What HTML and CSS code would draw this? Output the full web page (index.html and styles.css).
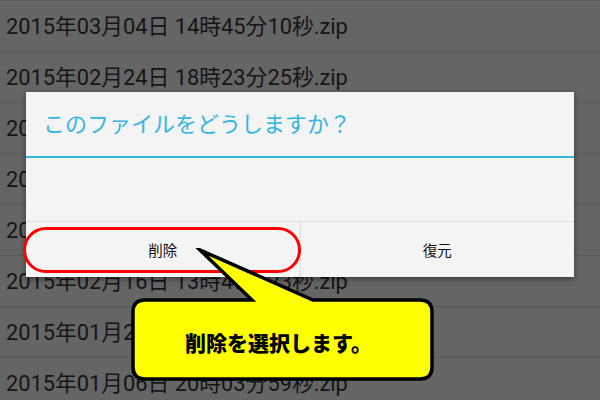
FILE: index.html
```html
<!DOCTYPE html>
<html lang="ja">
<head>
  <meta charset="UTF-8">
  <meta name="viewport" content="width=device-width, initial-scale=1.0">
  <title>ファイル一覧</title>
  <link rel="stylesheet" href="styles.css">
</head>
<body>

<div class="screen">
  <!-- File list (dimmed behind the dialog) -->
  <ul class="file-list">
    <li class="file-row">2015年03月04日 14時45分10秒.zip</li>
    <li class="file-row">2015年02月24日 18時23分25秒.zip</li>
    <li class="file-row">2015年02月23日 21時10分42秒.zip</li>
    <li class="file-row">2015年02月20日 09時31分08秒.zip</li>
    <li class="file-row">2015年02月18日 17時05分37秒.zip</li>
    <li class="file-row">2015年02月16日 13時47分23秒.zip</li>
    <li class="file-row">2015年01月27日 11時52分16秒.zip</li>
    <li class="file-row">2015年01月06日 20時03分59秒.zip</li>
  </ul>

  <!-- Dialog -->
  <div class="dialog">
    <div class="dialog-title">このファイルをどうしますか？</div>
    <div class="dialog-body"></div>
    <div class="dialog-buttons">
      <button class="dialog-btn">削除</button>
      <button class="dialog-btn">復元</button>
    </div>
  </div>

  <!-- Highlight + callout -->
  <div class="highlight"></div>
  <div class="callout">
    <svg class="callout-shape" width="306" height="134" viewBox="0 0 306 134">
      <path d="M15 52 L122 52 L70 2 L183 52 L290 52 Q302 52 302 64 L302 119 Q302 131 290 131 L15 131 Q3 131 3 119 L3 64 Q3 52 15 52 Z"
            fill="#ffff00" stroke="#000" stroke-width="3.5" stroke-linejoin="miter" stroke-miterlimit="12"/>
    </svg>
    <div class="callout-text">削除を選択します。</div>
  </div>
</div>

</body>
</html>
```

FILE: styles.css
```css
body {
  margin: 0;
  padding: 0;
  background-color: #656565;
  font-family: Roboto, "Noto Sans CJK JP", sans-serif;
}

.screen {
  position: relative;
  width: 600px;
  height: 400px;
  overflow: hidden;
  border-top: 1px solid #5a5a5a;
  box-sizing: border-box;
}

.file-list {
  list-style: none;
  margin: 0;
  padding: 0;
}

.file-row {
  height: 50px;
  line-height: 52px;
  padding-left: 6px;
  font-size: 21.8px;
  color: #151515;
  border-bottom: 1px solid #595959;
  white-space: nowrap;
}

.dialog {
  position: absolute;
  left: 26px;
  top: 91px;
  width: 548px;
  height: 185px;
  background-color: #f4f4f4;
  box-shadow: 0 2px 6px rgba(0, 0, 0, 0.45);
  display: flex;
  flex-direction: column;
}

.dialog-title {
  height: 64px;
  line-height: 60px;
  padding-left: 17px;
  font-family: "Noto Sans CJK JP", sans-serif;
  font-size: 22px;
  color: #33b5e5;
  border-bottom: 2px solid #33b5e5;
}

.dialog-body {
  flex: 1;
}

.dialog-buttons {
  display: flex;
  height: 55px;
  border-top: 1px solid #dcdcdc;
}

.dialog-btn {
  flex: 1;
  border: none;
  background: transparent;
  font-family: "Noto Sans CJK JP", sans-serif;
  font-size: 14.5px;
  color: #111;
  padding: 0;
}

.dialog-btn + .dialog-btn {
  border-left: 1px solid #dcdcdc;
}

.highlight {
  position: absolute;
  left: 23px;
  top: 226px;
  width: 272px;
  height: 40px;
  border: 3px solid #ff0000;
  border-radius: 23px;
}

.callout {
  position: absolute;
  left: 130px;
  top: 247px;
  width: 306px;
  height: 134px;
}

.callout-shape {
  display: block;
}

.callout-text {
  position: absolute;
  left: 3px;
  top: 52px;
  width: 299px;
  height: 79px;
  display: flex;
  align-items: center;
  justify-content: center;
  padding-right: 8px;
  padding-top: 4px;
  box-sizing: border-box;
  font-family: "Noto Sans CJK JP", sans-serif;
  font-weight: 900;
  font-size: 21px;
  color: #000;
}
```
